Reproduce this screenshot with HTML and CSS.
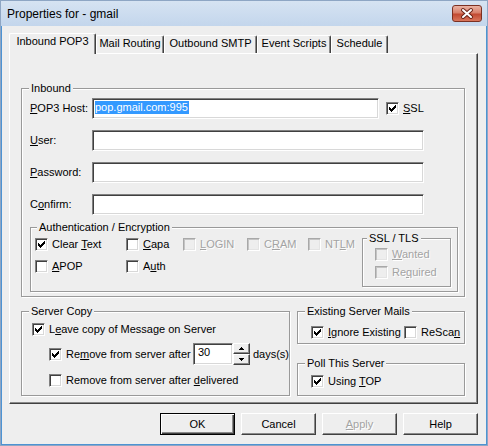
FILE: index.html
```html
<!DOCTYPE html>
<html>
<head>
<meta charset="utf-8">
<title>Properties for - gmail</title>
<link rel="stylesheet" href="styles.css">
</head>
<body>
<div class="window">
  <div class="titlebar">
    <span class="title">Properties for - gmail</span>
    <span class="close"><svg width="28" height="15" viewBox="0 0 28 15"><path d="M10 4 L18 11 M18 4 L10 11" stroke="#6a2418" stroke-width="4" stroke-linecap="round"/><path d="M10 4 L18 11 M18 4 L10 11" stroke="#fff" stroke-width="2" stroke-linecap="round"/></svg></span>
  </div>
  <div class="client">
    <div class="tabs">
      <div class="tab active t1">Inbound POP3</div>
      <div class="tab t2">Mail Routing</div>
      <div class="tab t3">Outbound SMTP</div>
      <div class="tab t4">Event Scripts</div>
      <div class="tab t5">Schedule</div>
    </div>
    <div class="panel">
      <fieldset class="group inbound">
        <legend>Inbound</legend>
        <div class="body">
          <div class="row">
            <span class="lbl"><u>P</u>OP3 Host:</span>
            <div class="edit host"><span class="sel">pop.gmail.com:995</span></div>
            <div class="cb ssl"><span class="box"><svg class="tick" width="7" height="7" viewBox="0 0 7 7" shape-rendering="crispEdges"><path d="M6 0h1v1h-1zM5 1h2v1h-2zM0 2h1v1h-1zM4 2h3v1h-3zM0 3h2v1h-2zM3 3h3v1h-3zM0 4h5v1h-5zM1 5h3v1h-3zM2 6h1v1h-1z"/></svg></span><span><u>S</u>SL</span></div>
          </div>
          <div class="row">
            <span class="lbl"><u>U</u>ser:</span>
            <div class="edit long"></div>
          </div>
          <div class="row">
            <span class="lbl"><u>P</u>assword:</span>
            <div class="edit long"></div>
          </div>
          <div class="row">
            <span class="lbl">C<u>o</u>nfirm:</span>
            <div class="edit long"></div>
          </div>
          <fieldset class="group auth">
            <legend>Authentication / Encryption</legend>
            <div class="auth-body">
              <div class="auth-grid">
                <div class="cb"><span class="box"><svg class="tick" width="7" height="7" viewBox="0 0 7 7" shape-rendering="crispEdges"><path d="M6 0h1v1h-1zM5 1h2v1h-2zM0 2h1v1h-1zM4 2h3v1h-3zM0 3h2v1h-2zM3 3h3v1h-3zM0 4h5v1h-5zM1 5h3v1h-3zM2 6h1v1h-1z"/></svg></span><span>Clear <u>T</u>ext</span></div>
                <div class="cb"><span class="box"></span><span><u>C</u>apa</span></div>
                <div class="cb off"><span class="box"></span><span><u>L</u>OGIN</span></div>
                <div class="cb off"><span class="box"></span><span>C<u>R</u>AM</span></div>
                <div class="cb off"><span class="box"></span><span>NT<u>L</u>M</span></div>
                <div class="cb"><span class="box"></span><span><u>A</u>POP</span></div>
                <div class="cb"><span class="box"></span><span>A<u>u</u>th</span></div>
              </div>
              <fieldset class="group ssltls">
                <legend>SSL / TLS</legend>
                <div class="ssl-body">
                  <div class="cb off"><span class="box"></span><span><u>W</u>anted</span></div>
                  <div class="cb off"><span class="box"></span><span>Re<u>q</u>uired</span></div>
                </div>
              </fieldset>
            </div>
          </fieldset>
        </div>
      </fieldset>
      <div class="lower">
        <fieldset class="group servercopy">
          <legend>Server Copy</legend>
          <div class="sc-body">
            <div class="cb"><span class="box"><svg class="tick" width="7" height="7" viewBox="0 0 7 7" shape-rendering="crispEdges"><path d="M6 0h1v1h-1zM5 1h2v1h-2zM0 2h1v1h-1zM4 2h3v1h-3zM0 3h2v1h-2zM3 3h3v1h-3zM0 4h5v1h-5zM1 5h3v1h-3zM2 6h1v1h-1z"/></svg></span><span>L<u>e</u>ave copy of Message on Server</span></div>
            <div class="spin-row">
              <div class="cb after"><span class="box"><svg class="tick" width="7" height="7" viewBox="0 0 7 7" shape-rendering="crispEdges"><path d="M6 0h1v1h-1zM5 1h2v1h-2zM0 2h1v1h-1zM4 2h3v1h-3zM0 3h2v1h-2zM3 3h3v1h-3zM0 4h5v1h-5zM1 5h3v1h-3zM2 6h1v1h-1z"/></svg></span><span>Re<u>m</u>ove from server after</span></div>
              <div class="edit days">30</div>
              <div class="spin">
                <span class="sbtn"><svg width="5" height="3" viewBox="0 0 5 3" shape-rendering="crispEdges"><path d="M2 0h1v1h-1zM1 1h3v1h-3zM0 2h5v1h-5z"/></svg></span>
                <span class="sbtn"><svg width="5" height="3" viewBox="0 0 5 3" shape-rendering="crispEdges"><path d="M0 0h5v1h-5zM1 1h3v1h-3zM2 2h1v1h-1z"/></svg></span>
              </div>
              <span class="unit">days(s)</span>
            </div>
            <div class="cb indent delivered"><span class="box"></span><span>Remove from server after <u>d</u>elivered</span></div>
          </div>
        </fieldset>
        <div class="rightcol">
          <fieldset class="group existing">
            <legend>Existing Server Mails</legend>
            <div class="ex-body">
              <div class="cb ignore"><span class="box"><svg class="tick" width="7" height="7" viewBox="0 0 7 7" shape-rendering="crispEdges"><path d="M6 0h1v1h-1zM5 1h2v1h-2zM0 2h1v1h-1zM4 2h3v1h-3zM0 3h2v1h-2zM3 3h3v1h-3zM0 4h5v1h-5zM1 5h3v1h-3zM2 6h1v1h-1z"/></svg></span><span><u>I</u>gnore Existing</span></div>
              <div class="cb"><span class="box"></span><span>ReSca<u>n</u></span></div>
            </div>
          </fieldset>
          <fieldset class="group poll">
            <legend>Poll This Server</legend>
            <div class="poll-body">
              <div class="cb"><span class="box"><svg class="tick" width="7" height="7" viewBox="0 0 7 7" shape-rendering="crispEdges"><path d="M6 0h1v1h-1zM5 1h2v1h-2zM0 2h1v1h-1zM4 2h3v1h-3zM0 3h2v1h-2zM3 3h3v1h-3zM0 4h5v1h-5zM1 5h3v1h-3zM2 6h1v1h-1z"/></svg></span><span>Using <u>T</u>OP</span></div>
            </div>
          </fieldset>
        </div>
      </div>
    </div>
    <div class="buttons">
      <div class="btn default">OK</div>
      <div class="btn">Cancel</div>
      <div class="btn disabled"><u>A</u>pply</div>
      <div class="btn">Help</div>
    </div>
  </div>
</div>
</body>
</html>
```
FILE: styles.css
```css
* { box-sizing: border-box; }

html, body {
  margin: 0;
  padding: 0;
}

body {
  width: 488px;
  height: 446px;
  overflow: hidden;
  font-family: "Liberation Sans", Arial, sans-serif;
  font-size: 11px;
  line-height: 13px;
  color: #000;
  background: #eeeeee;
}

u { text-decoration: underline; text-underline-offset: 1px; }

.window {
  width: 488px;
  height: 446px;
  border: 1px solid #8ea6c4;
  background: #eeeeee;
  display: flex;
  flex-direction: column;
}

/* Title bar */
.titlebar {
  flex: none;
  height: 25px;
  display: flex;
  align-items: flex-start;
  padding: 0 5px 0 6px;
  background: linear-gradient(#d6e3f2, #c3d6ec);
}

.title {
  font-size: 12px;
  line-height: 14px;
  margin-top: 6px;
  color: #000;
}

.close {
  margin-left: auto;
  margin-top: 4px;
  width: 30px;
  height: 17px;
  border: 1px solid #7b3022;
  border-radius: 3px;
  background: linear-gradient(#eab3a4 0%, #d8806b 45%, #c24a32 55%, #d9765c 100%);
  display: flex;
  align-items: center;
  justify-content: center;
}

/* Client area */
.client {
  flex: 1;
  display: flex;
  flex-direction: column;
  border: 1px solid #4d93d3;
  border-top: none;
  padding: 7px 8px 9px 7px;
}

/* Tabs */
.tabs {
  flex: none;
  height: 20px;
  display: flex;
  align-items: flex-end;
}

.tab {
  height: 18px;
  padding-top: 1px;
  text-align: center;
  white-space: nowrap;
  border: 1px solid;
  border-color: #ffffff #404040 transparent #ffffff;
  border-bottom: none;
  border-radius: 2px 2px 0 0;
  box-shadow: inset -1px 0 0 #8a8a8a;
  background: #eeeeee;
}

.tab.active {
  height: 21px;
  margin-bottom: -1px;
  position: relative;
  z-index: 1;
}

.t1 { width: 87px; }
.t2 { width: 68px; }
.t3 { width: 93px; }
.t4 { width: 74px; }
.t5 { width: 57px; }

/* Panel */
.panel {
  flex: none;
  height: 351px;
  border: 1px solid;
  border-color: #ffffff #404040 #404040 #ffffff;
  box-shadow: inset -1px -1px 0 #8a8a8a;
  padding: 28px 12px 0 11px;
}

/* Group boxes */
.group {
  margin: 0;
  padding: 0;
  min-width: 0;
  border: 1px solid #999999;
  box-shadow: inset 1px 1px 0 #ffffff, 1px 1px 0 #ffffff;
}

.group > legend {
  padding: 0 2px;
  margin-left: 7px;
  line-height: 13px;
  background: #eeeeee;
}

.inbound > .body {
  padding: 3px 6px 4px 8px;
}

.row {
  display: flex;
  align-items: center;
  height: 21px;
}

.row + .row { margin-top: 11px; }

.lbl {
  flex: none;
  width: 62px;
  white-space: nowrap;
}

.edit {
  flex: none;
  height: 21px;
  background: #ffffff;
  border: 1px solid;
  border-color: #808080 #ffffff #ffffff #808080;
  box-shadow: inset 1px 1px 0 #404040, inset -1px -1px 0 #d8d8d8;
  padding: 2px 0 0 2px;
  white-space: nowrap;
}

.edit.host { width: 287px; }
.edit.long { width: 332px; }

.sel {
  display: inline-block;
  background: #3399ff;
  color: #ffffff;
  line-height: 13px;
  padding: 0 1px 0 0;
}

/* Checkboxes */
.cb {
  display: flex;
  align-items: center;
  gap: 4px;
  height: 13px;
  white-space: nowrap;
}

.box {
  flex: none;
  width: 13px;
  height: 13px;
  background: #ffffff;
  border: 1px solid;
  border-color: #808080 #ffffff #ffffff #808080;
  box-shadow: inset 1px 1px 0 #404040, inset -1px -1px 0 #d8d8d8;
  display: flex;
  align-items: center;
  justify-content: center;
}

.tick { display: block; fill: #000; }

.cb.off { color: #a3a3a3; text-shadow: 1px 1px 0 #ffffff; }

.cb.off .box {
  background: #eeeeee;
  border-color: #a8a8a8 #ffffff #ffffff #a8a8a8;
  box-shadow: inset 1px 1px 0 #c4c4c4, inset -1px -1px 0 #e4e4e4;
}

.cb.ssl { margin-left: 7px; }

/* Authentication group */
.auth {
  width: 428px;
  margin-top: 6px;
}

.auth > legend { margin-left: 6px; }

.auth-body {
  display: flex;
  align-items: flex-start;
  padding: 0 0 4px 4px;
}

.auth-grid {
  margin-top: 4px;
  display: grid;
  grid-template-columns: 91px 57px 64px 61px auto;
  grid-auto-rows: 13px;
  row-gap: 9px;
}

.ssltls {
  width: 89px;
  margin-left: auto;
  margin-right: 6px;
  margin-top: -2px;
}

.ssltls > legend { margin-left: 4px; }

.ssl-body {
  display: flex;
  flex-direction: column;
  gap: 5px;
  padding: 3px 0 7px 12px;
}

/* Lower groups */
.lower {
  display: flex;
  gap: 7px;
  margin-top: 8px;
}

.servercopy { flex: none; width: 269px; }

.sc-body {
  padding: 5px 0 8px 10px;
}

.spin-row {
  display: flex;
  align-items: center;
  height: 22px;
  margin-top: 7px;
  margin-left: 17px;
}

.cb.after { width: 144px; }

.edit.days {
  width: 40px;
  height: 22px;
  padding: 2px 0 0 4px;
}

.spin {
  flex: none;
  display: flex;
  flex-direction: column;
  width: 17px;
  height: 22px;
}

.sbtn {
  flex: 1;
  display: flex;
  align-items: center;
  justify-content: center;
  border: 1px solid;
  border-color: #ffffff #404040 #404040 #ffffff;
  box-shadow: inset -1px -1px 0 #8a8a8a;
  background: #eeeeee;
}

.sbtn svg { display: block; fill: #000; }

.unit { margin-left: 3px; }

.cb.delivered {
  margin-top: 9px;
  margin-left: 17px;
}

.rightcol {
  flex: 1;
  display: flex;
  flex-direction: column;
}

.ex-body {
  display: flex;
  padding: 8px 0 4px 13px;
}

.cb.ignore { width: 93px; }

.poll { margin-top: 13px; }

.poll-body {
  padding: 5px 0 7px 13px;
}

/* Buttons */
.buttons {
  flex: none;
  display: flex;
  justify-content: flex-end;
  gap: 6px;
  margin-top: 9px;
}

.btn {
  width: 75px;
  height: 22px;
  display: flex;
  align-items: center;
  justify-content: center;
  border: 1px solid;
  border-color: #ffffff #404040 #404040 #ffffff;
  box-shadow: inset -1px -1px 0 #8a8a8a;
  background: #eeeeee;
}

.btn.default {
  border-color: #000000;
  box-shadow: inset 1px 1px 0 #ffffff, inset -1px -1px 0 #404040, inset -2px -2px 0 #8a8a8a;
}

.btn.disabled {
  color: #a3a3a3;
  text-shadow: 1px 1px 0 #ffffff;
}
```
